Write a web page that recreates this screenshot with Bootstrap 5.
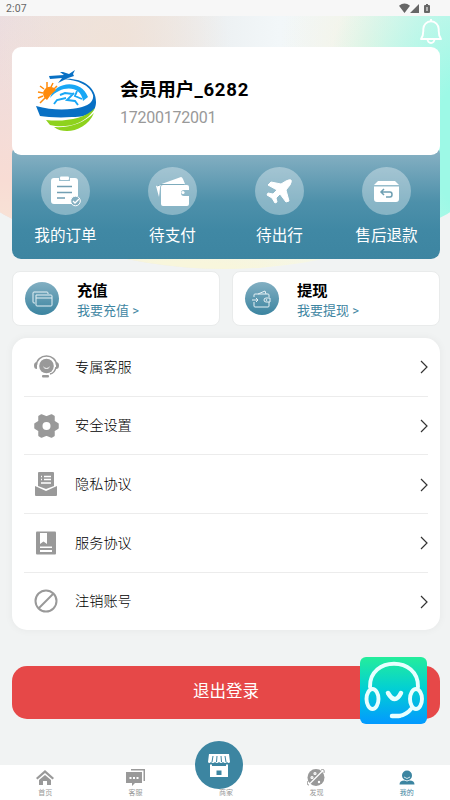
<!DOCTYPE html>
<html lang="zh-CN">
<head>
<meta charset="utf-8">
<meta name="viewport" content="width=device-width, initial-scale=1">
<title>我的</title>
<link href="https://cdn.jsdelivr.net/npm/bootstrap@5.3.0/dist/css/bootstrap.min.css" rel="stylesheet">
<style>
html,body{height:100%;overflow:hidden}
body{background:#f1f3f3;font-family:Roboto,"Noto Sans CJK SC",sans-serif;color:#000}
svg{display:block;flex:none}
.screen{width:450px;height:800px;overflow:hidden}
.statusbar{height:16px;background:#f7f7f7;color:#666;font-size:10.5px;line-height:16px;padding:1px 19px 0 6px;letter-spacing:.1px}
.hero{left:0;top:16px;width:450px;height:253px;z-index:0;clip-path:ellipse(400px 327px at 50% -74px);
background:radial-gradient(ellipse 150px 260px at 470px 130px,#9df9e6 0 25%,#a9f8e8cc 50%,#b5f5e600 100%),
radial-gradient(circle at 370px 30px,#f5f4e6 0,#f5f4e600 90px),
radial-gradient(circle at 110px 30px,#f0e2d8 0,#f0e2d800 120px),
radial-gradient(ellipse 300px 45px at 180px 255px,#f8f6dc 20%,#f8f6dc00 100%),
linear-gradient(#e4e2e200,#f8dcd4 65%,#f8e9d8) 0 0/60px 100% no-repeat,
linear-gradient(90deg,#ebdde0,#ece5e1 26%,#edf1f3 50%,#f2f7f9 62%,#eef4ee)}
.bell{right:7px;top:18px}
.content{padding:31px 10px 0 12px}
.profile{height:108px;border-radius:9px;padding-left:23px}
.member{margin-left:21px;padding-top:2px}
.member h1{font-size:18.6px;line-height:26px;font-weight:700}
.member h1 span{letter-spacing:.75px}
.phone{font-size:16px;line-height:20px;color:#999;margin-top:5px;letter-spacing:-.25px}
.orders{margin-top:-10px;height:114px;padding-top:21.5px;border-radius:9px;background:linear-gradient(#84b0c2,#82aec1 9%,#4d90aa 50%,#4088a4 75%,#3d85a1)}
.orb{width:49px;height:48px;background:#ffffff57}
.order-name{font-size:15.6px;line-height:22px;color:#fff;margin-top:10px}
.money-row{gap:12px;margin-top:12px}
.money{height:55px;border-radius:8px;border:1px solid #e9ebeb;padding-left:12px}
.money-icon{width:34px;height:33px;background:linear-gradient(#82afc2,#3b84a0)}
.money-text{margin-left:18px;padding-top:3px}
.money b{font-size:15.3px;line-height:20px;font-weight:700}
.money-text span{font-size:13px;line-height:18px;color:#3f86a2;margin-top:1px}
.menu{height:292px;border-radius:15px;padding:0 12px;margin-top:12px;box-shadow:0 0 9px #0000000d}
.menu-row{height:58.7px;border-bottom:1px solid #ececec;padding:0 0 0 10px;font-size:14.2px}
.menu-row:last-child{border:0;height:57px}
.menu-row>span{margin-left:16px;padding-top:1px;font-weight:300;color:#000}
.menu-row .ms-auto{position:relative;top:.4px}
.logout{height:53px;background:#e64848;border-radius:15px;margin-top:36px;color:#fff;font-size:16.5px;padding-bottom:1px;border:0}
.service{left:360px;top:657px;z-index:3}
.tabs{left:0;bottom:0;width:452px;height:35px;z-index:2;font-size:7px;line-height:10px;color:#999}
.tabs svg{height:18px;margin-top:4px;margin-bottom:1px}
.store{width:48px;height:48px;background:#3c85a1;left:195px;top:741px;z-index:2}
.active-tab{color:#3c85a1}
</style>
<script src="https://cdn.jsdelivr.net/npm/bootstrap@5.3.0/dist/js/bootstrap.bundle.min.js"></script>
</head>
<body>
<div class="screen position-relative">
<div class="hero position-absolute"></div>
<div class="statusbar d-flex justify-content-between position-relative"><span>2:07</span>
<svg width="33" height="14" fill="#666"><path d="M1 4.800Q6.500 0 12 4.800L6.500 12zM12 12 21 3v9z"/><path d="M27 4h1V3h2v1h1q1 0 1 1v6q0 1-1 1h-4q-1 0-1-1V5q0-1 1-1"/><path d="M28.500 6h1v4h-1z" fill="#fff"/></svg></div>
<svg class="bell position-absolute" width="24" height="27" fill="none" stroke="#fff" stroke-width="1.900"><path d="M2 21Q4.300 18 4.300 13v-2a7.700 7.700 0 0 1 15.400 0v2q0 5 2.300 8zM12 3.500V1" stroke-linejoin="round"/><path d="M8.500 21a3.500 4 0 0 0 7 0"/></svg>
<main class="content position-relative">
<section class="profile bg-white d-flex align-items-center position-relative">
<svg width="64" height="64" viewBox="0 0 64 64">
<path d="M27 10C46 8 61 17 61 33c0 9-6 15-24 15-13 1-25 0-32-1L1 37c17 5 36 4 46 1 8-2 12-7 11-12C55 16 43 11 27 10z" fill="#0870c4"/>
<path d="M15 29C20 12 46 10 53 28l-5 4C46 16 26 16 15 29z" fill="#18a7f5"/>
<path d="M19 35l3-4 9-2M25 26l5-2 8 1M39 24l-7 7 8 1 3 4M42 22l-2 5 7 3" fill="none" stroke="#18a7f5" stroke-width="1.900"/>
<path d="M11 51c18 2 39-1 49-12-3 6-8 11-17 15-9 4-20 4-28 2z" fill="#8ed21c"/>
<path d="M19 58c16 1 30-4 40-14-5 12-17 18-27 18-5 0-9-1-13-4z" fill="#8ed21c"/>
<path d="M12 31a7 7 0 1 1 9-10q-5 4-9 10z" fill="#ff8b0b"/>
<path d="M12 19V13M16 18l2-4M9 20l-4-3M8 24l-5-1M8 27l-5 2M10 29l-5 5M19 20l3-3" stroke="#ff8b0b" stroke-width="1.500"/>
<path d="M14 7l15-1-4-3h3l6 2 6-4-2 4 1 2-6 2-10 5 4-5-12 1z" fill="#0870c4"/>
</svg>
<div class="member"><h1 class="mb-0">会员用户<span>_6282</span></h1><div class="phone">17200172001</div></div>
</section>
<section class="orders d-flex">
<div class="col-3 d-flex flex-column align-items-center"><div class="orb rounded-circle"><svg width="49" height="48"><path d="M13 11h5v3h11v-3h5q3 0 3 3v15a6 6 0 0 0-5 8H13q-3 0-3-3V14q0-3 3-3z" fill="#fff"/><rect x="19" y="9.500" width="9" height="3.500" rx="1" fill="#fff"/><path d="M16 19.500h15M16 25.500h15M16 31h8" stroke="#729fb3" stroke-width="1.700"/><circle cx="34.500" cy="34" r="4.800" fill="#83aec0" stroke="#fff"/><path d="m32 34 2 2 4-4" fill="none" stroke="#fff" stroke-width="1.300"/></svg></div><div class="order-name">我的订单</div></div>
<div class="col-3 d-flex flex-column align-items-center"><div class="orb rounded-circle"><svg width="49" height="48" fill="#fff"><path d="m8 19 25-9q1 0 2 2l2 5H16q-4 0-4 4l-1 9z"/><path d="M15 18h24q2 0 2 2v3h-5a3 3 0 0 0 0 6h5v8q0 2-2 2H15q-2 0-2-2V20q0-2 2-2z"/><path d="m9 19 4-1.500H36" fill="none" stroke="#7dabbc"/><circle cx="35" cy="25.500" r="1.600"/></svg></div><div class="order-name">待支付</div></div>
<div class="col-3 d-flex flex-column align-items-center"><div class="orb rounded-circle"><svg width="49" height="48" fill="#fff" stroke="#fff" stroke-linejoin="round"><path d="M26 17l5-3q4-2 5-1t-1 5l-4 5 3 11-3 1-6-8-4 4 1 4-2 1-3-5-5-3 1-2 5 1 4-4-9-5 3-3z"/></svg></div><div class="order-name">待出行</div></div>
<div class="col-3 d-flex flex-column align-items-center"><div class="orb rounded-circle"><svg width="49" height="48" fill="#fff"><path d="m12 18 4-4h17l4 4zM12 19.500h25V32q0 3-3 3H15q-3 0-3-3z"/><path d="M19 25h9q2 0 2 2.500t-2 2.500h-4M22 22l-3 3 3 3" fill="none" stroke="#6f9fb2" stroke-width="1.500"/></svg></div><div class="order-name">售后退款</div></div>
</section>
<section class="money-row d-flex">
<div class="money bg-white d-flex align-items-center flex-fill"><div class="money-icon rounded-circle d-flex align-items-center justify-content-center"><svg width="22" height="18" fill="none" stroke="#e6f1f5"><path d="M4 13H3q-1 0-1-1V3q0-1 1-1h13q1 0 1 1v1M5 5h15q1 0 1 1v9q0 1-1 1H6q-1 0-1-1V5zm0 3h16"/></svg></div><div class="money-text d-flex flex-column"><b>充值</b><span>我要充值 &gt;</span></div></div>
<div class="money bg-white d-flex align-items-center flex-fill"><div class="money-icon rounded-circle d-flex align-items-center justify-content-center"><svg width="22" height="20" fill="none" stroke="#e6f1f5"><path d="M3 8V6q0-1 1-1h13q1 0 1 1v2M3 13v4q0 1 1 1h13q1 0 1-1v-4M7 5l7-3 1 3M1 11h6M5 9l2 2-2 2M19 9h-4q-2 0-2 2t2 2h4z"/><circle cx="15.500" cy="11" r=".5"/></svg></div><div class="money-text d-flex flex-column"><b>提现</b><span>我要提现 &gt;</span></div></div>
</section>
<section class="menu bg-white">
<div class="menu-row d-flex align-items-center"><svg width="25" height="24" viewBox="0 0 25 24" fill="#999"><circle cx="12.500" cy="11" r="7.300"/><path d="M2.500 10a10 9 0 0 1 20 0M22 12q-1 6-6 7" fill="none" stroke="#999" stroke-width="1.500"/><path d="M3 7v7q-3 0-3-3.500T3 7M22 7v7q3 0 3-3.500T22 7"/><rect x="8" y="20" width="7" height="2.500" rx="1"/><path d="M9.500 12a3.500 3 0 0 0 6 0" fill="none" stroke="#fff"/></svg><span>专属客服</span><svg class="ms-auto" width="8" height="14" fill="none" stroke="#333" stroke-width="1.200"><path d="m1 1 6 6-6 6"/></svg></div>
<div class="menu-row d-flex align-items-center"><svg width="25" height="24" viewBox="0 0 25 24"><path d="M5 2.500 7.500 1l5 2 5-2L20 2.500v5l4 2.500v4l-4 2.500v5L17.500 23l-5-2-5 2L5 21.500v-5L1 14v-4l4-2.500z" fill="#999" stroke="#999" stroke-width="1.500" stroke-linejoin="round"/><circle cx="12.500" cy="12" r="4" fill="#fff"/></svg><span>安全设置</span><svg class="ms-auto" width="8" height="14" fill="none" stroke="#333" stroke-width="1.200"><path d="m1 1 6 6-6 6"/></svg></div>
<div class="menu-row d-flex align-items-center"><svg width="25" height="24" viewBox="0 0 25 24"><path d="M4 1q0-1 1-1h14q1 0 1 1v13l-8 3-8-3zM1 14l11 5 11-5v9q0 1-1 1H2q-1 0-1-1z" fill="#999"/><path d="M7 4.500h1M10 4.500h7M7 7.500h1M10 7.500h7M7 11h10" stroke="#fff" stroke-width="1.400"/></svg><span>隐私协议</span><svg class="ms-auto" width="8" height="14" fill="none" stroke="#333" stroke-width="1.200"><path d="m1 1 6 6-6 6"/></svg></div>
<div class="menu-row d-flex align-items-center"><svg width="25" height="24" viewBox="0 0 25 24"><rect x="2" y=".5" width="20" height="23" rx="1" fill="#999"/><path d="M6 2h7v11l-3.500-2.500L6 13zM6 15.500h12v1.500H6zM6 19h12v2H6z" fill="#fff"/></svg><span>服务协议</span><svg class="ms-auto" width="8" height="14" fill="none" stroke="#333" stroke-width="1.200"><path d="m1 1 6 6-6 6"/></svg></div>
<div class="menu-row d-flex align-items-center"><svg width="25" height="24" viewBox="0 0 25 24" fill="none" stroke="#999" stroke-width="2"><circle cx="12" cy="12" r="10.500"/><path d="M4.500 19.500 19.500 4.500"/></svg><span>注销账号</span><svg class="ms-auto" width="8" height="14" fill="none" stroke="#333" stroke-width="1.200"><path d="m1 1 6 6-6 6"/></svg></div>
</section>
<button class="logout w-100">退出登录</button>
</main>
<svg class="service position-absolute" width="67" height="67" viewBox="0 0 67 67"><defs><linearGradient id="mint" x2="0" y2="1"><stop stop-color="#24ed9b"/><stop offset=".48" stop-color="#02cfd4"/><stop offset="1" stop-color="#0399ff"/></linearGradient></defs><rect width="67" height="67" rx="6" fill="url(#mint)"/><g fill="none" stroke="#e8ffff" stroke-width="3.900" stroke-linecap="round"><path d="M10 30C9-1 59-1 58 30M51 52c-3 4-6 6-12 7"/><ellipse cx="12.500" cy="42" rx="6" ry="10"/><ellipse cx="56" cy="42" rx="6" ry="10"/><path d="M28 36q7 12 13 0M32 59h7" stroke-width="4.500"/></g></svg>
<nav class="tabs position-absolute bg-white d-flex text-center">
<div class="flex-fill w-25 d-flex flex-column align-items-center"><svg width="18" height="18" fill="#999"><path d="M0 9 9 1l9 8-1.500 1.500L9 4l-7.500 6.500zM3 11l6-5 6 5v5h-4v-4H7v4H3z"/></svg><span>首页</span></div>
<div class="flex-fill w-25 d-flex flex-column align-items-center"><svg width="20" height="18" fill="#999"><path d="M5 0h14v12h-1.500V1.500H5zM0 3h16v11H9l-3 3v-3H0z"/><path d="M3.500 8h2v2h-2zM7 8h2v2H7zM10.500 8h2v2h-2z" fill="#fff"/></svg><span>客服</span></div>
<div class="flex-fill w-25 d-flex flex-column align-items-center"><svg width="18" height="18"></svg><span>商家</span></div>
<div class="flex-fill w-25 d-flex flex-column align-items-center"><svg width="18" height="18"><circle cx="9" cy="8.500" r="8.500" fill="#999"/><path d="M1 16.500 17 .5" stroke="#fff" stroke-width="1.200"/><path d="M1 12q-2 4 1 4M14 1q4-2 3 3" stroke="#999" fill="none"/><g fill="none" stroke="#fff" stroke-width="1.200"><circle cx="8" cy="4.500" r="1"/><circle cx="5" cy="8.500" r="1"/><circle cx="12" cy="13" r=".6"/></g></svg><span>发现</span></div>
<div class="active-tab flex-fill w-25 d-flex flex-column align-items-center"><svg width="18" height="18" fill="#3c85a1"><circle cx="9" cy="6.500" r="5"/><path d="M1.500 15.500q0-4 5-4l2.500 1 2.500-1q5 0 5 4z"/><path d="M6 8q3 3 6 0" fill="none" stroke="#fff" stroke-width=".8"/></svg><span>我的</span></div>
</nav>
<div class="store position-absolute rounded-circle"><svg width="48" height="48"><path d="M14 13h20l1 8q-1 2-3 0-2 2-4 0-2 2-4 0-2 2-4 0-2 2-4 0-2 2-3 0zM15 23.500h2V25h14v-1.500h2V36H15z" fill="#fff"/><path d="m18 15-1 6M22 15l-.5 6M26 15l.5 6M30 15l1 6" stroke="#3c85a1"/><path d="M21.500 29.500h5V34h-5z" fill="#3c85a1"/></svg></div>
</div>
</body>
</html>
